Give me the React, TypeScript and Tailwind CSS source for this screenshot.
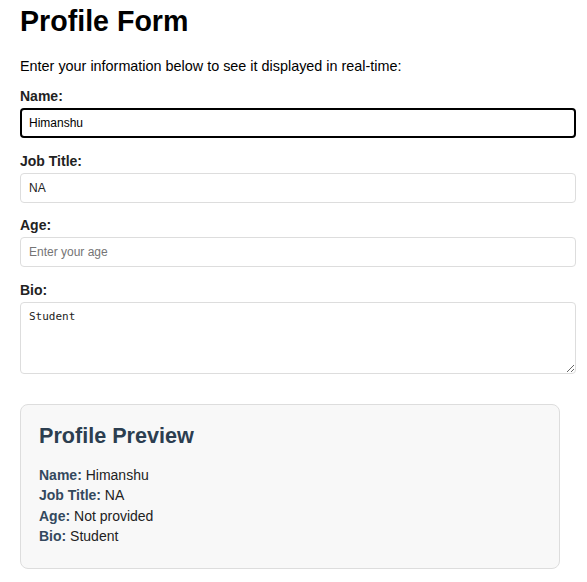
import React, { useState } from 'react';

const App: React.FC = () => {
  const [name, setName] = useState('Himanshu');
  const [jobTitle, setJobTitle] = useState('NA');
  const [age, setAge] = useState('');
  const [bio, setBio] = useState('Student');

  return (
    <div className="pl-5 pr-[11px] pb-4 bg-white text-black" style={{ fontFamily: '"Liberation Sans", Arial, sans-serif' }}>
      {/* Header */}
      <h1 className="text-[28.6px] font-bold leading-[34px] pt-[4px] mb-[19px]">Profile Form</h1>
      <p className="text-[14.4px] leading-[18px] mb-[13px]">Enter your information below to see it displayed in real-time:</p>

      {/* Form */}
      <div className="flex flex-col gap-[14.67px]">
        <div>
          <label className="block text-[14px] font-bold leading-[17px] mb-[3px] text-[#222]">Name:</label>
          <input
            autoFocus
            value={name}
            onChange={(e) => setName(e.target.value)}
            className="block w-full h-[30px] px-[7px] text-[12px] border-2 border-black rounded-[4px] outline-none"
          />
        </div>
        <div>
          <label className="block text-[14px] font-bold leading-[17px] mb-[3px] text-[#222]">Job Title:</label>
          <input
            value={jobTitle}
            onChange={(e) => setJobTitle(e.target.value)}
            className="block w-full h-[30px] px-[8px] text-[12px] border border-[#ddd] rounded-[4px] outline-none text-[#222]"
          />
        </div>
        <div>
          <label className="block text-[14px] font-bold leading-[17px] mb-[3px] text-[#222]">Age:</label>
          <input
            value={age}
            placeholder="Enter your age"
            onChange={(e) => setAge(e.target.value)}
            className="block w-full h-[30px] px-[8px] text-[12px] border border-[#ddd] rounded-[4px] outline-none placeholder:text-[#757575]"
          />
        </div>
        <div>
          <label className="block text-[14px] font-bold leading-[17px] mb-[3px] text-[#222]">Bio:</label>
          <textarea
            value={bio}
            onChange={(e) => setBio(e.target.value)}
            className="block w-full h-[72px] px-[8px] py-[7px] text-[11px] leading-[14px] border border-[#ddd] rounded-[4px] outline-none text-[#222]"
            style={{ fontFamily: '"DejaVu Sans Mono", monospace', resize: 'vertical' }}
          />
        </div>
      </div>

      {/* Preview */}
      <div className="mt-[30px] w-[540px] bg-[#f8f8f8] border border-[#ddd] rounded-[8px] px-[18px] pt-[17px] pb-[22px]">
        <h2 className="text-[21.6px] font-bold leading-[28px] text-[#2c3e50] mb-[15px]">Profile Preview</h2>
        <div className="text-[14px] leading-[20.33px] text-[#222]">
          <p><strong className="text-[#34495e]">Name:</strong> {name || 'Not provided'}</p>
          <p><strong className="text-[#34495e]">Job Title:</strong> {jobTitle || 'Not provided'}</p>
          <p><strong className="text-[#34495e]">Age:</strong> {age || 'Not provided'}</p>
          <p><strong className="text-[#34495e]">Bio:</strong> {bio || 'Not provided'}</p>
        </div>
      </div>
    </div>
  );
};

export default App;
